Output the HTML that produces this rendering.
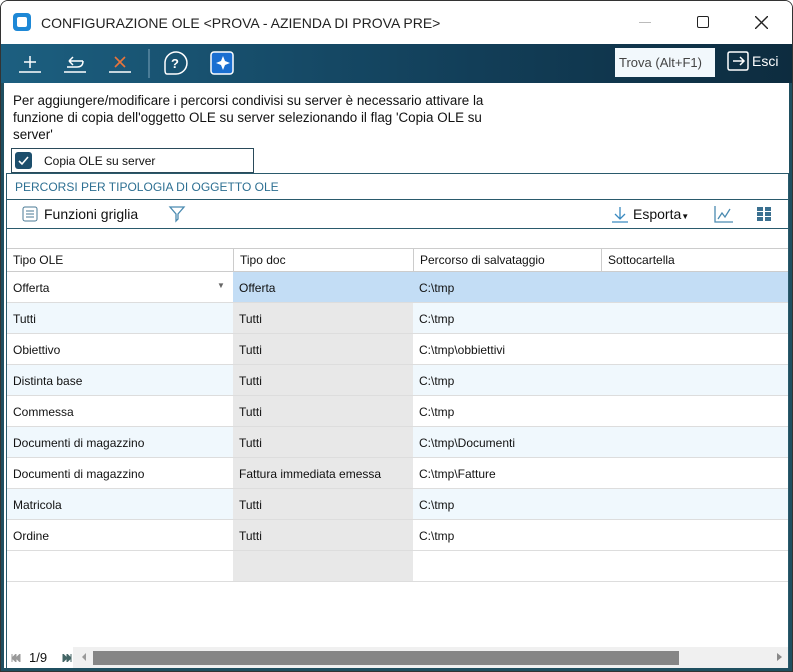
<!DOCTYPE html>
<html><head><meta charset="utf-8"><style>
*{box-sizing:border-box;margin:0;padding:0}
body{width:793px;height:672px;overflow:hidden;background:#fff;font-family:"Liberation Sans",sans-serif;font-size:12px;color:#111;position:relative}
.win{position:absolute;left:0;top:0;width:793px;height:672px;border:1px solid #333;border-radius:8px 8px 0 0;overflow:hidden}
.title{position:absolute;left:0;top:0;width:791px;height:43px;background:#fff}
.title .t{position:absolute;left:40px;top:14px;font-size:14px;color:#222}
.logo{position:absolute;left:12px;top:12px;width:18px;height:18px;background:#1e88d6;border-radius:4px}
.logo:after{content:"";position:absolute;left:4px;top:4px;width:10px;height:10px;background:#fff;border-radius:2px}
.tb{position:absolute;left:0;top:43px;width:791px;height:39px;background:linear-gradient(90deg,#1c5f80,#123e58 60%,#0d2c3f)}
.side{position:absolute;top:82px;width:4px;height:590px;background:#1f4f60}
.find{position:absolute;left:614px;top:47px;width:100px;height:29px;background:#f2f8fc;color:#444;font-size:13px;padding:7px 0 0 4px}
.esci{position:absolute;left:726px;top:49px;color:#fff;font-size:14px;line-height:22px}
.grid{position:absolute;left:5px;top:172px;width:783px;height:496px;border:1px solid #2a5a6c;border-bottom:none}
.row{position:absolute;left:0;width:781px;height:31px;border-bottom:1px solid #ddd}
.c{position:absolute;top:0;height:30px;padding:9px 0 0 6px;white-space:nowrap}
</style></head><body>
<div class="win">
<div class="title"><div class="logo"></div><div class="t">CONFIGURAZIONE OLE &lt;PROVA - AZIENDA DI PROVA PRE&gt;</div>
<div style="position:absolute;left:638px;top:21px;width:12px;height:1px;background:#bbb"></div>
<div style="position:absolute;left:696px;top:15px;width:12px;height:12px;border:1.5px solid #222;border-radius:2px"></div>
<svg style="position:absolute;left:754px;top:15px" width="13" height="13"><path d="M0 0L13 13M13 0L0 13" stroke="#222" stroke-width="1.4"/></svg>
</div>
<div class="tb">
<svg width="260" height="39" style="position:absolute;left:0;top:0">
<g stroke="#fff" stroke-width="1.5" fill="none">
<path d="M18 28H40M29 12V24M23 18H35"/>
<path d="M63 28H85M68 17H82M68 17L72 13M68 17L72 21M82 17Q82 23 76 23H66"/>
<path d="M108 28H130"/>
<path d="M148 5V34" stroke="#5a8aa3"/>
<path d="M175 30L166 30Q164 30 164 26V18A11 11 0 1 1 175 30Z"/>
</g>
<path d="M114 13L124 23M124 13L114 23" stroke="#e8743b" stroke-width="1.6"/>
<text x="170" y="24" fill="#fff" font-size="13" font-weight="bold" font-family="Liberation Sans">?</text>
<rect x="210" y="8" width="22" height="22" rx="3" fill="#1a6fd1" stroke="#fff" stroke-width="1.5"/>
<path d="M222 12L224 17L229 19L224 21L222 26L220 21L215 19L220 17Z" fill="#fff"/>
</svg>
</div>
<div class="find">Trova (Alt+F1)</div>
<div class="esci"><svg width="22" height="22" style="vertical-align:top;margin-right:3px"><path d="M9 2H3Q1 2 1 4V18Q1 20 3 20H9M9 2H19Q21 2 21 4V18Q21 20 19 20H9" fill="none" stroke="#fff" stroke-width="1.5"/><path d="M6 11H17M13 7L17 11L13 15" fill="none" stroke="#fff" stroke-width="1.5"/></svg>Esci</div>
<div class="side" style="left:0;width:3px"></div><div class="side" style="left:788px;width:3px"></div>
<div style="position:absolute;left:12px;top:91px;font-size:13.4px;line-height:17px;width:500px">Per aggiungere/modificare i percorsi condivisi su server è necessario attivare la funzione di copia dell'oggetto OLE su server selezionando il flag 'Copia OLE su server'</div>
<div style="position:absolute;left:10px;top:147px;width:243px;height:25px;border:1px solid #2a4a5a"></div>
<div style="position:absolute;left:14px;top:151px;width:17px;height:17px;background:#1c4e6c;border-radius:3px"><svg width="17" height="17"><path d="M4 9L7 12L13 5" stroke="#fff" stroke-width="1.6" fill="none"/></svg></div>
<div style="position:absolute;left:43px;top:153px;font-size:12px">Copia OLE su server</div>
<div class="grid">
<div style="position:absolute;left:8px;top:6px;color:#2d6f92;font-size:12px">PERCORSI PER TIPOLOGIA DI OGGETTO OLE</div>
<div style="position:absolute;left:0;top:25px;width:781px;height:30px;border-top:1px solid #2a5a6c;border-bottom:1px solid #2a5a6c">
<svg width="16" height="16" style="position:absolute;left:15px;top:6px"><rect x="1" y="1" width="14" height="14" rx="2" fill="none" stroke="#4a7a95"/><path d="M4 5H12M4 8H12M4 11H12" stroke="#4a7a95"/></svg>
<div style="position:absolute;left:37px;top:6px;font-size:14px">Funzioni griglia</div>
<svg width="18" height="18" style="position:absolute;left:161px;top:5px"><path d="M2 2H16L10 9V14L8 16V9Z" fill="none" stroke="#4a8ab0" stroke-width="1.3"/></svg>
<svg width="18" height="18" style="position:absolute;left:604px;top:6px"><path d="M9 1V12M4 8L9 13L14 8M1 16H17" fill="none" stroke="#3a8ac0" stroke-width="1.3"/></svg>
<div style="position:absolute;left:626px;top:6px;font-size:14px">Esporta<span style="font-size:8px">▼</span></div>
<svg width="20" height="18" style="position:absolute;left:707px;top:5px"><path d="M1 1V17H19M4 14L8 8L11 12L16 4" fill="none" stroke="#4a8ab0" stroke-width="1.3"/></svg>
<svg width="14" height="14" style="position:absolute;left:750px;top:7px" fill="#3a7090"><rect x="0" y="0" width="6" height="4"/><rect x="8" y="0" width="6" height="4"/><rect x="0" y="5" width="6" height="4"/><rect x="8" y="5" width="6" height="4"/><rect x="0" y="10" width="6" height="4"/><rect x="8" y="10" width="6" height="4"/></svg>
</div>
<div class="row" style="top:74px;height:24px;border-top:1px solid #ccc;border-bottom:1px solid #ccc">
<div class="c" style="left:0;padding-top:4px">Tipo OLE</div>
<div class="c" style="left:226px;padding-top:4px;border-left:1px solid #ccc;height:22px">Tipo doc</div>
<div class="c" style="left:406px;padding-top:4px;border-left:1px solid #ccc;height:22px">Percorso di salvataggio</div>
<div class="c" style="left:594px;padding-top:4px;border-left:1px solid #ccc;height:22px">Sottocartella</div>
</div>
<div class="row" style="top:98px;background:#c3ddf5"><div class="c" style="left:0;width:226px;background:#fff">Offerta<span style="position:absolute;left:210px;top:9px;font-size:8px;color:#666">▼</span></div><div class="c" style="left:226px">Offerta</div><div class="c" style="left:406px">C:\tmp</div></div>
<div class="row" style="top:129px;background:#f0f8fd"><div class="c" style="left:0">Tutti</div><div class="c" style="left:226px;width:180px;background:#e8e8e8">Tutti</div><div class="c" style="left:406px">C:\tmp</div></div>
<div class="row" style="top:160px"><div class="c" style="left:0">Obiettivo</div><div class="c" style="left:226px;width:180px;background:#e8e8e8">Tutti</div><div class="c" style="left:406px">C:\tmp\obbiettivi</div></div>
<div class="row" style="top:191px;background:#f0f8fd"><div class="c" style="left:0">Distinta base</div><div class="c" style="left:226px;width:180px;background:#e8e8e8">Tutti</div><div class="c" style="left:406px">C:\tmp</div></div>
<div class="row" style="top:222px"><div class="c" style="left:0">Commessa</div><div class="c" style="left:226px;width:180px;background:#e8e8e8">Tutti</div><div class="c" style="left:406px">C:\tmp</div></div>
<div class="row" style="top:253px;background:#f0f8fd"><div class="c" style="left:0">Documenti di magazzino</div><div class="c" style="left:226px;width:180px;background:#e8e8e8">Tutti</div><div class="c" style="left:406px">C:\tmp\Documenti</div></div>
<div class="row" style="top:284px"><div class="c" style="left:0">Documenti di magazzino</div><div class="c" style="left:226px;width:180px;background:#e8e8e8">Fattura immediata emessa</div><div class="c" style="left:406px">C:\tmp\Fatture</div></div>
<div class="row" style="top:315px;background:#f0f8fd"><div class="c" style="left:0">Matricola</div><div class="c" style="left:226px;width:180px;background:#e8e8e8">Tutti</div><div class="c" style="left:406px">C:\tmp</div></div>
<div class="row" style="top:346px"><div class="c" style="left:0">Ordine</div><div class="c" style="left:226px;width:180px;background:#e8e8e8">Tutti</div><div class="c" style="left:406px">C:\tmp</div></div>
<div class="row" style="top:377px"><div class="c" style="left:226px;width:180px;background:#e8e8e8"></div></div>
<div style="position:absolute;left:0;top:473px;width:781px;height:21px;background:#f0f0f0">
<div style="position:absolute;left:0;top:0;width:66px;height:21px;background:#fff"></div>
<svg width="10" height="8" style="position:absolute;left:4px;top:7px"><path d="M1 0V8M9 0L5 4L9 8ZM5 0L1 4L5 8Z" fill="#999" stroke="#999"/></svg>
<div style="position:absolute;left:22px;top:3px;font-size:13px">1/9</div>
<svg width="10" height="8" style="position:absolute;left:55px;top:7px"><path d="M9 0V8M1 0L5 4L1 8ZM5 0L9 4L5 8Z" fill="#466" stroke="#466"/></svg>
<div style="position:absolute;left:71px;top:6px;width:0;height:0;border:4px solid transparent;border-right-color:#999;border-right-width:4px"></div>
<div style="position:absolute;left:86px;top:4px;width:586px;height:14px;background:#858585"></div>
<div style="position:absolute;left:770px;top:6px;width:0;height:0;border:4px solid transparent;border-left-color:#888;border-left-width:5px"></div>
</div>
</div>
<div style="position:absolute;left:0;top:667px;width:791px;height:4px;background:#1f4f60"></div>
</div>
</body></html>
